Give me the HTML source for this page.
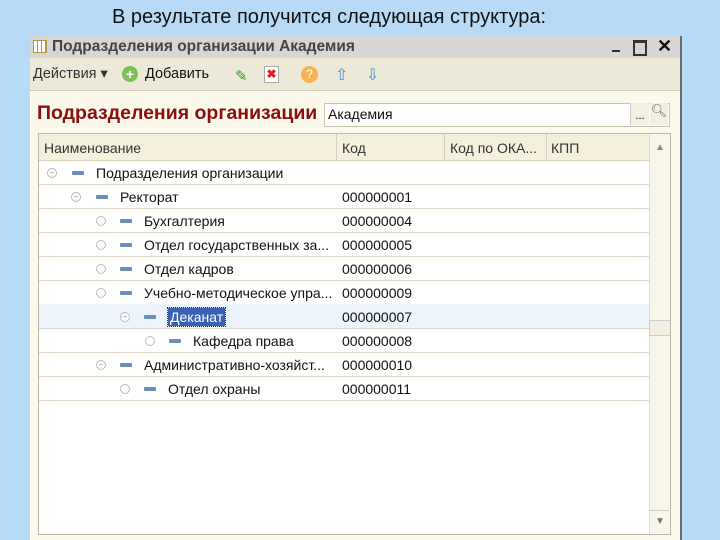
<!DOCTYPE html>
<html><head><meta charset="utf-8"><style>
body{margin:0;width:720px;height:540px;background:#b7daf6;position:relative;overflow:hidden;font-family:"Liberation Sans",sans-serif;}
.a{position:absolute;}
.t{font-size:14px;color:#111;white-space:nowrap;}
.win{left:30px;top:36px;width:650px;height:504px;background:#fbf8ec;border-right:2px solid #6a6a6a;}
.row{position:absolute;left:0;width:610px;height:24px;border-bottom:1px solid #ddd8c8;}
.circ{position:absolute;width:8px;height:8px;border:1px solid #bbb;border-radius:50%;background:#fff;top:8px;}
.minus{position:absolute;width:12px;height:4px;background:#6e8fb5;border-radius:1px;top:11px;}
.nm{position:absolute;top:5px;}
.cd{position:absolute;left:303px;top:5px;}
</style></head><body>
<div class="a t" style="left:112px;top:6px;font-size:20px;color:#111;">В результате получится следующая структура:</div>
<div class="a win">
  <div class="a" style="left:0;top:0;width:650px;height:22px;background:#d6d6d6;"></div>
  <div class="a" style="left:3px;top:4px;width:12px;height:11px;border:1px solid #b39a40;background:repeating-linear-gradient(90deg,#fff 0 3px,#b39a40 3px 4px);"></div>
  <div class="a t" style="left:22px;top:2px;font-size:15.5px;font-weight:bold;color:#444;">Подразделения организации Академия</div>
  <div class="a" style="left:582px;top:14px;width:8px;height:2px;background:#333;"></div>
  <div class="a" style="left:603px;top:4px;width:10px;height:11px;border:2px solid #333;border-top-width:3px;"></div>
  <div class="a t" style="left:627px;top:0px;font-size:18px;font-weight:bold;">✕</div>
  <div class="a" style="left:0;top:22px;width:650px;height:32px;background:#ece9d8;border-bottom:1px solid #cfcab5;"></div>
  <div class="a t" style="left:3px;top:30px;color:#333;font-size:14.5px;">Действия ▾</div>
  <div class="a" style="left:92px;top:30px;width:16px;height:16px;border-radius:50%;background:#7cbf57;color:#fff;font-size:14px;text-align:center;line-height:16px;font-weight:bold;">+</div>
  <div class="a t" style="left:115px;top:30px;font-size:14.5px;"><u>Д</u>обавить</div>
  <div class="a" style="left:205px;top:31px;color:#3a9a2a;font-size:15px;">✎</div>
  <div class="a" style="left:234px;top:30px;width:13px;height:15px;border:1px solid #aaa;background:#fff;color:#d22;font-size:12px;text-align:center;line-height:15px;font-weight:bold;">✖</div>
  <div class="a" style="left:271px;top:30px;width:17px;height:17px;border-radius:50%;background:#f2b552;color:#fff;font-size:12px;text-align:center;line-height:17px;">?</div>
  <div class="a" style="left:305px;top:29px;color:#3d8fd6;font-size:16px;">⇧</div>
  <div class="a" style="left:336px;top:29px;color:#3d8fd6;font-size:16px;">⇩</div>
  <div class="a t" style="left:7px;top:66px;font-size:19.5px;font-weight:bold;color:#8a1010;">Подразделения организации</div>
  <div class="a" style="left:294px;top:67px;width:344px;height:22px;background:#fff;border:1px solid #c8c3b0;"></div>
  <div class="a t" style="left:298px;top:70px;">Академия</div>
  <div class="a" style="left:600px;top:67px;width:18px;height:22px;border-left:1px solid #ccc;background:#f2efe2;font-size:11px;text-align:center;line-height:26px;">...</div>
  <div class="a" style="left:620px;top:67px;width:18px;height:22px;background:#f2efe2;color:#666;text-align:center;font-size:13px;">&#x1F50D;&#xFE0E;</div>
  <div class="a" style="left:8px;top:97px;width:631px;height:400px;background:#fff;border:1px solid #bdb8a5;overflow:hidden;">
    <div class="a" style="left:0;top:0;width:610px;height:26px;background:#f4f0dc;border-bottom:1px solid #d8d2bc;"></div>
    <div class="a t" style="left:5px;top:6px;color:#333;">Наименование</div>
    <div class="a" style="left:297px;top:0;width:1px;height:26px;background:#d8d2bc;"></div>
    <div class="a t" style="left:303px;top:6px;color:#333;">Код</div>
    <div class="a" style="left:405px;top:0;width:1px;height:26px;background:#d8d2bc;"></div>
    <div class="a t" style="left:411px;top:6px;color:#333;">Код по ОКА...</div>
    <div class="a" style="left:507px;top:0;width:1px;height:26px;background:#d8d2bc;"></div>
    <div class="a t" style="left:512px;top:6px;color:#333;">КПП</div>
    <div class="a" style="left:610px;top:0;width:21px;height:400px;background:#f8f5ea;border-left:1px solid #ddd;"></div>
    <div class="a" style="left:616px;top:8px;color:#888;font-size:10px;">▲</div>
    <div class="a" style="left:610px;top:186px;width:20px;height:14px;border:1px solid #ccc;background:#f3f0e2;"></div>
    <div class="a" style="left:610px;top:376px;width:20px;height:22px;border-top:1px solid #ccc;"></div>
    <div class="a" style="left:616px;top:382px;color:#777;font-size:10px;">▼</div>
    <div class="a" style="left:0;top:26px;">
      <div class="row" style="top:0"><div class="circ" style="left:8px;text-align:center;font-size:8px;line-height:8px;color:#888">–</div><div class="minus" style="left:33px"></div><div class="t nm" style="left:57px">Подразделения организации</div></div>
      <div class="row" style="top:24px"><div class="circ" style="left:32px;text-align:center;font-size:8px;line-height:8px;color:#888">–</div><div class="minus" style="left:57px"></div><div class="t nm" style="left:81px">Ректорат</div><div class="t cd">000000001</div></div>
      <div class="row" style="top:48px"><div class="circ" style="left:57px"></div><div class="minus" style="left:81px"></div><div class="t nm" style="left:105px">Бухгалтерия</div><div class="t cd">000000004</div></div>
      <div class="row" style="top:72px"><div class="circ" style="left:57px"></div><div class="minus" style="left:81px"></div><div class="t nm" style="left:105px">Отдел государственных за...</div><div class="t cd">000000005</div></div>
      <div class="row" style="top:96px"><div class="circ" style="left:57px"></div><div class="minus" style="left:81px"></div><div class="t nm" style="left:105px">Отдел кадров</div><div class="t cd">000000006</div></div>
      <div class="row" style="top:120px"><div class="circ" style="left:57px"></div><div class="minus" style="left:81px"></div><div class="t nm" style="left:105px">Учебно-методическое упра...</div><div class="t cd">000000009</div></div>
      <div class="row" style="top:144px;background:#eef4fb"><div class="circ" style="left:81px;text-align:center;font-size:8px;line-height:8px;color:#888">–</div><div class="minus" style="left:105px"></div><div class="t nm" style="left:129px;top:4px;background:#3a62b4;color:#fff;padding:1px 2px;outline:1px dotted #222">Деканат</div><div class="t cd">000000007</div></div>
      <div class="row" style="top:168px"><div class="circ" style="left:106px"></div><div class="minus" style="left:130px"></div><div class="t nm" style="left:154px">Кафедра права</div><div class="t cd">000000008</div></div>
      <div class="row" style="top:192px"><div class="circ" style="left:57px;text-align:center;font-size:8px;line-height:8px;color:#888">–</div><div class="minus" style="left:81px"></div><div class="t nm" style="left:105px">Административно-хозяйст...</div><div class="t cd">000000010</div></div>
      <div class="row" style="top:216px"><div class="circ" style="left:81px"></div><div class="minus" style="left:105px"></div><div class="t nm" style="left:129px">Отдел охраны</div><div class="t cd">000000011</div></div>
    </div>
  </div>
</div>
</body></html>
